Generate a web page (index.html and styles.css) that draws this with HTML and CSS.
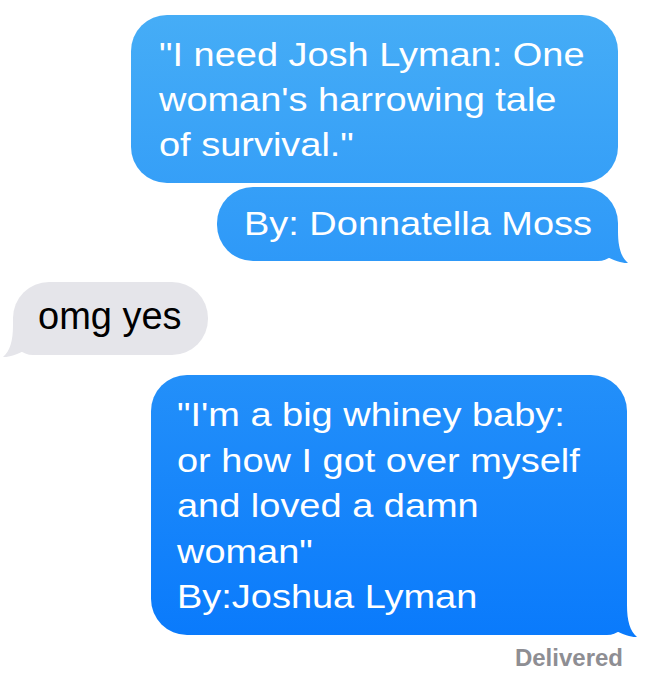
FILE: index.html
```html
<!DOCTYPE html>
<html lang="en">
<head>
<meta charset="utf-8">
<title>Messages</title>
<link rel="stylesheet" href="styles.css">
</head>
<body>
<div class="thread">
  <div class="msg out b1"><span class="txt">"I need Josh Lyman: One<br>woman's harrowing tale<br>of survival."</span></div>
  <div class="msg out b2"><span class="txt">By: Donnatella Moss</span><div class="tail tail-r"></div></div>
  <div class="msg in b3"><span class="txt-in">omg yes</span><div class="tail tail-l"></div></div>
  <div class="msg out b4"><span class="txt">"I'm a big whiney baby:<br>or how I got over myself<br>and loved a damn<br>woman"<br>By:Joshua Lyman</span><div class="tail tail-r"></div></div>
  <div class="status">Delivered</div>
</div>
</body>
</html>
```

FILE: styles.css
```css
html, body {
  margin: 0;
  padding: 0;
  background: #ffffff;
}

body {
  width: 650px;
  height: 678px;
  overflow: hidden;
  font-family: "Liberation Sans", Arial, sans-serif;
}

.thread {
  display: flex;
  flex-direction: column;
  padding-top: 15px;
}

.msg {
  position: relative;
  box-sizing: border-box;
  font-size: 33px;
  line-height: 45px;
  white-space: nowrap;
  border-radius: 36px;
}

.txt {
  display: inline-block;
  transform: scaleX(1.15);
  transform-origin: left top;
}

.txt-in {
  display: inline-block;
  font-size: 38px;
}

.out {
  align-self: flex-end;
  color: #ffffff;
  background: linear-gradient(to bottom, #47aef6 0px, #0677fc 678px);
  background-attachment: fixed;
}

.in {
  align-self: flex-start;
  color: #000000;
  background: #e5e5ea;
}

.b1 {
  width: 487px;
  height: 168px;
  margin-right: 32px;
  padding: 17px 0 0 28px;
}

.b2 {
  width: 401px;
  height: 74px;
  margin-top: 4px;
  margin-right: 32px;
  padding: 14px 0 0 27px;
  border-bottom-right-radius: 20px;
}

.b3 {
  width: 195px;
  height: 73px;
  margin-top: 21px;
  margin-left: 13px;
  padding: 12px 0 0 25px;
  border-bottom-left-radius: 20px;
}

.b4 {
  width: 476px;
  height: 260px;
  margin-top: 20px;
  margin-right: 23px;
  padding: 17px 0 0 26px;
  line-height: 45.5px;
  border-bottom-right-radius: 20px;
}

.tail {
  position: absolute;
  bottom: -3px;
  width: 38px;
  height: 33px;
}

.tail-r {
  right: -11px;
  background: linear-gradient(to bottom, #47aef6 0px, #0677fc 678px);
  background-attachment: fixed;
  clip-path: path('M27 0 C27 16 30 26 37 32 C32 32.5 24 30 14 25 C10 28 6 29.5 0 30 L0 0 Z');
}

.tail-l {
  left: -11px;
  background: #e5e5ea;
  clip-path: path('M11 0 C11 16 8 26 1 32 C6 32.5 14 30 24 25 C28 28 32 29.5 38 30 L38 0 Z');
}

.status {
  align-self: flex-end;
  margin-right: 27px;
  margin-top: 8px;
  font-size: 24px;
  font-weight: bold;
  line-height: 30px;
  color: #8e8e93;
}
```
